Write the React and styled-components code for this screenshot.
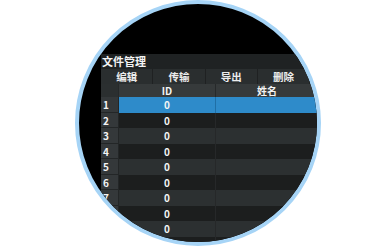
import styled, { createGlobalStyle } from 'styled-components';

const GlobalStyle = createGlobalStyle`
  html, body {
    margin: 0;
    padding: 0;
    background: #ffffff;
  }
`;

const Page = styled.div`
  width: 380px;
  height: 247px;
  overflow: hidden;
  padding-left: 75px;
  box-sizing: border-box;
`;

const Lens = styled.div`
  width: 246px;
  height: 246px;
  border-radius: 50%;
  border: 4px solid #a6d4f6;
  box-sizing: border-box;
  background: #000;
  overflow: hidden;
  padding: 50px 0 0 22px;
`;

const Window = styled.div`
  width: 300px;
  font-family: 'Noto Sans CJK SC', 'DejaVu Sans', sans-serif;
  font-weight: 700;
  color: #f4f4f4;
`;

const TitleBar = styled.div`
  height: 15px;
  line-height: 15px;
  background: #1f2223;
  font-size: 11px;
  padding-left: 1px;
`;

const Toolbar = styled.div`
  display: flex;
  height: 15px;
  background: #2a2e2f;
`;

const ToolButton = styled.div`
  width: 52.3px;
  flex: none;
  text-align: center;
  font-size: 10.5px;
  line-height: 15px;
  color: #ececec;
  border-right: 1px solid #1f2122;
  box-sizing: border-box;
`;

const Table = styled.div`
  display: grid;
  grid-template-columns: 18px 97px 1fr;
`;

const HeadCell = styled.div`
  height: 13px;
  line-height: 13px;
  font-size: 10px;
  text-align: center;
  background: ${(p) => (p.$corner ? '#2b2f30' : '#363a3b')};
  border-right: 1px solid #26292a;
  box-sizing: border-box;
  padding-right: ${(p) => (p.$wide ? '82px' : '0')};
`;

const NumCell = styled.div`
  height: 15.5px;
  line-height: 15.5px;
  font-size: 10px;
  padding-left: 2px;
  background: #34383a;
  border-bottom: 1px solid #232627;
  border-right: 1px solid #232627;
  box-sizing: border-box;
`;

const Cell = styled.div`
  height: 15.5px;
  line-height: 15.5px;
  font-size: 10px;
  text-align: center;
  background: ${(p) => (p.$selected ? '#2e8bca' : p.$odd ? '#2c3031' : '#1c1e1e')};
  border-right: 1px solid ${(p) => (p.$selected ? '#1f6fa6' : '#262829')};
  box-sizing: border-box;
`;

const tools = ['编辑', '传输', '导出', '删除'];
const rows = [1, 2, 3, 4, 5, 6, 7, 8, 9, 10];

export default function App() {
  return (
    <Page>
      <GlobalStyle />
      <Lens>
        <Window>
          <TitleBar>文件管理</TitleBar>
          <Toolbar>
            {tools.map((t) => (
              <ToolButton key={t}>{t}</ToolButton>
            ))}
          </Toolbar>
          <Table>
            <HeadCell $corner />
            <HeadCell>ID</HeadCell>
            <HeadCell $wide>姓名</HeadCell>
            {rows.map((n, i) => [
              <NumCell key={`n${n}`}>{n}</NumCell>,
              <Cell key={`a${n}`} $selected={i === 0} $odd={i % 2 === 0}>0</Cell>,
              <Cell key={`b${n}`} $selected={i === 0} $odd={i % 2 === 0} />,
            ])}
          </Table>
        </Window>
      </Lens>
    </Page>
  );
}
